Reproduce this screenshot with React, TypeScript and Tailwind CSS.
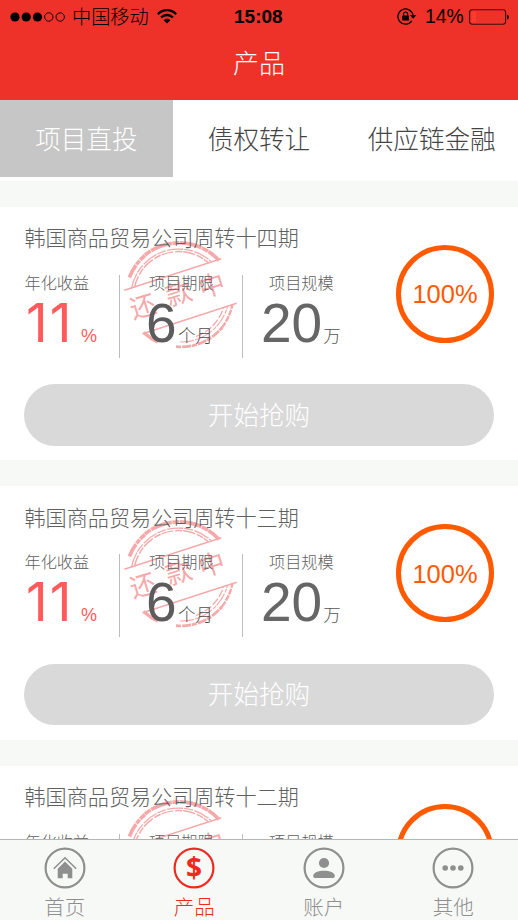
import React, { useState } from "react";

const projects = [
  { id: 14, name: "韩国商品贸易公司周转十四期", rate: "11", term: "6", scale: "20", progress: 100 },
  { id: 13, name: "韩国商品贸易公司周转十三期", rate: "11", term: "6", scale: "20", progress: 100 },
  { id: 12, name: "韩国商品贸易公司周转十二期", rate: "11", term: "6", scale: "20", progress: 100 },
];

const tabs = ["项目直投", "债权转让", "供应链金融"];

const StatusBar: React.FC = () => (
  <div className="flex h-[33px] items-center text-black">
    <svg className="ml-[10px] h-[10px] w-[56px] shrink-0" viewBox="0 0 56 10">
      <circle cx="5" cy="5" r="4.6" />
      <circle cx="16.2" cy="5" r="4.6" />
      <circle cx="27.5" cy="5" r="4.6" />
      <circle cx="38.8" cy="5" r="4.2" fill="none" stroke="#000" strokeWidth="0.9" />
      <circle cx="50.2" cy="5" r="4.2" fill="none" stroke="#000" strokeWidth="0.9" />
    </svg>
    <span className="ml-[6px] w-[78px] pt-[2px] text-[19.2px] leading-none whitespace-nowrap">中国移动</span>
    <svg className="ml-[7px] h-[15px] w-5 shrink-0" viewBox="0 0 20 15" fill="none" stroke="#000">
      <path d="M0.9 5.2 C6 -0.2 14 -0.2 19.1 5.2" strokeWidth="2.4" />
      <path d="M4.1 8.5 C7.4 5.2 12.6 5.2 15.9 8.5" strokeWidth="2.4" />
      <path d="M6.7 11.2 C8.5 9.4 11.5 9.4 13.3 11.2 L10 14.6 Z" fill="#000" stroke="none" />
    </svg>
    <span className="ml-[57px] w-[50px] text-[19px] leading-none font-bold">15:08</span>
    <svg className="ml-[113px] h-[17px] w-5 shrink-0" viewBox="0 0 20 17">
      <path d="M14.8 12.9 A7.6 7.6 0 1 1 16 7.2" fill="none" stroke="#000" strokeWidth="1.3" />
      <path d="M12.9 7 H19.4 L16.2 10.8 Z" />
      <rect x="5.2" y="7.6" width="6.8" height="5" rx="0.6" />
      <path d="M6.6 8 V6 A2 2 0 0 1 10.6 6 V8" fill="none" stroke="#000" strokeWidth="1.2" />
    </svg>
    <span className="ml-[8px] w-[40px] pt-px text-[19.3px] leading-none">14%</span>
    <svg className="ml-[4px] h-4 w-[41px] shrink-0" viewBox="0 0 41 16">
      <rect x="0.6" y="0.8" width="36" height="14.4" rx="2.6" fill="none" stroke="#000" strokeOpacity="0.75" strokeWidth="1.1" />
      <rect x="2.4" y="2.6" width="4.6" height="10.8" fill="#ff3b30" />
      <path d="M38 5.4 Q40 6.2 40 8 Q40 9.8 38 10.6 Z" />
    </svg>
  </div>
);

// red "repaying" seal behind the figures
const Stamp: React.FC = () => (
  <svg
    className="absolute top-[33px] left-[120px] h-[110px] w-[120px]"
    viewBox="120 239.5 120 110"
    fill="none"
    stroke="#f6a9aa"
  >
    <path d="M129.4 277 A53 53 0 0 1 145 255" strokeWidth="3.6" strokeDasharray="14 0.8 5 0.8" />
    <path d="M145 254.5 A54 54 0 0 1 219 260" strokeWidth="3.6" strokeDasharray="7 0.6 22 0.5" />
    <path d="M131.5 288 A48 48 0 0 1 211 261" strokeWidth="1.3" strokeDasharray="16 1 9 1.5" />
    <path d="M134.5 287 A45 45 0 0 1 208 262" strokeWidth="1.5" strokeDasharray="12 2 7 1" />
    <path d="M124.3 289.7 L221.3 258.3" strokeWidth="1.5" />
    <path d="M142.7 333.3 L236.7 302.7" strokeWidth="1.5" />
    <path d="M143.5 332 L152 338.5 L158 341.5" strokeWidth="3.4" />
    <path d="M152 334.5 A48 48 0 0 0 168 340.5" strokeWidth="1.6" strokeDasharray="5 2" />
    <path d="M176 346.2 A53 53 0 0 0 222 327" strokeWidth="2.8" strokeDasharray="5 1.2 9 0.8" />
    <path d="M222 327 A53 53 0 0 0 232.3 304.5" strokeWidth="2.4" strokeDasharray="6 1" />
    <path d="M180 341.5 A48 48 0 0 0 227.5 306" strokeWidth="1.2" strokeDasharray="14 1.5 4 1" />
    <path d="M196 336 A45 45 0 0 0 223.5 307.5" strokeWidth="1.3" strokeDasharray="8 2" />
    <g
      transform="rotate(-17 180 294)"
      className="font-normal"
      fill="#f6a9aa"
      stroke="none"
      fontSize="26"
      textAnchor="middle"
    >
      <text x="141" y="304">还</text>
      <text x="179" y="302">款</text>
      <text x="213" y="304">中</text>
    </g>
  </svg>
);

const ProgressRing: React.FC<{ value: number }> = ({ value }) => (
  <div className="mt-[38px] mr-6 ml-auto flex h-[98px] w-[98px] items-center justify-center rounded-full border-5 border-[#ff5a00] text-[25.5px] text-[#ff5a00]">
    <span className="pt-[3px] leading-none">{value}%</span>
  </div>
);

const ProjectCard: React.FC<{ project: (typeof projects)[number] }> = ({ project }) => (
  <div className="relative h-[253.5px] shrink-0 bg-white">
    <Stamp />
    <div className="relative flex h-[177.5px]">
      <div className="pl-6">
        <h2 className="mt-[18.5px] pl-[0.5px] text-[21.1px] leading-7 whitespace-nowrap text-[#606060]">
          {project.name}
        </h2>
        <div className="mt-[21.5px] flex h-[83px] whitespace-nowrap text-[#666]">
          <div className="w-[94.5px]">
            <p className="pl-[0.5px] text-[16.2px] leading-4 text-[#606060]">年化收益</p>
            <p className="flex items-baseline text-[#ff5a5c]">
              <span className="w-[55px] pl-[2px] font-['Inter'] text-[53.5px] leading-[64px] font-normal tracking-[2px]">
                {project.rate}
              </span>
              <span className="ml-[2px] text-[18px]">%</span>
            </p>
          </div>
          <div className="w-[124px] border-x-[1.5px] border-[#bdbdbd] pl-[29.5px]">
            <p className="text-[16.2px] leading-4 text-[#606060]">项目期限</p>
            <p className="flex items-baseline">
              <span className="-ml-[3px] text-[55px] leading-[64px] text-[#5c5c5c]">{project.term}</span>
              <span className="ml-[1.5px] text-[17.5px] text-[#4c4c4c]">个月</span>
            </p>
          </div>
          <div className="pl-[18.5px]">
            <p className="pl-[8px] text-[16.2px] leading-4 text-[#606060]">项目规模</p>
            <p className="flex items-baseline">
              <span className="text-[55px] leading-[64px]">{project.scale}</span>
              <span className="ml-[1px] text-[17.5px] text-[#555]">万</span>
            </p>
          </div>
        </div>
      </div>
      <ProgressRing value={project.progress} />
    </div>
    <button
      type="button"
      className="mx-6 flex h-[61.5px] w-[470px] items-center justify-center rounded-full bg-[#d9d9d9] pt-[2px] text-[25.6px] text-white"
    >
      开始抢购
    </button>
  </div>
);

const navItems = [
  {
    label: "首页",
    icon: (
      <>
        <path d="M9.8 21.7 L21 10.8 L32.2 21.7" fill="none" stroke="currentColor" strokeWidth="1.6" />
        <path d="M21 14.6 L28.3 21.7 V31.2 H23.7 V26.8 H18.7 V31.2 H13.7 V21.7 Z" />
      </>
    ),
  },
  {
    label: "产品",
    icon: (
      <text x="21" y="31" textAnchor="middle" fontSize="28" className="font-['Open_Sans'] font-bold">
        $
      </text>
    ),
  },
  {
    label: "账户",
    icon: (
      <>
        <circle cx="21" cy="16" r="5.1" />
        <path d="M10.2 29 C10.2 25.5 15.5 23.7 21 23.7 C26.5 23.7 31.8 25.5 31.8 29 Q31.8 31 30 31 H12 Q10.2 31 10.2 29 Z" />
      </>
    ),
  },
  {
    label: "其他",
    icon: (
      <>
        <circle cx="13.2" cy="21" r="2.8" />
        <circle cx="21" cy="21" r="2.8" />
        <circle cx="28.8" cy="21" r="2.8" />
      </>
    ),
  },
];

const App: React.FC = () => {
  const [activeTab, setActiveTab] = useState(0);
  const [activeNav, setActiveNav] = useState(1);

  return (
    <div className="flex h-[920px] w-[518px] flex-col overflow-hidden bg-[#f7f9f7] font-['Liberation_Sans','Noto_Sans_CJK_SC',sans-serif] font-light">
      <header className="h-[99.5px] shrink-0 bg-[#ee3129]">
        <StatusBar />
        <h1 className="flex h-[63px] items-center justify-center text-[26px] text-white">产品</h1>
      </header>

      <div className="flex h-[81.5px] shrink-0 bg-white">
        {tabs.map((tab, i) => (
          <button
            key={tab}
            type="button"
            onClick={() => setActiveTab(i)}
            className={`flex h-[77.5px] flex-1 items-center justify-center pt-[3px] text-[25.6px] whitespace-nowrap ${
              i === activeTab ? "bg-[#c6c6c6] text-white" : "text-[#444]"
            }`}
          >
            {tab}
          </button>
        ))}
      </div>

      <main className="flex min-h-0 flex-1 flex-col gap-[26px] overflow-hidden pt-[25.5px]">
        {projects.map((project) => (
          <ProjectCard key={project.id} project={project} />
        ))}
      </main>

      <nav className="flex h-[81px] shrink-0 border-t-[1.5px] border-[#b5b5b5] bg-[#f7f9f7]">
        {navItems.map((item, i) => (
          <button
            key={item.label}
            type="button"
            onClick={() => setActiveNav(i)}
            className={`flex flex-1 flex-col items-center pt-[7px] text-[20.5px] ${
              i === activeNav ? "text-[#ee2a20]" : "text-[#8f8f8f]"
            }`}
          >
            <svg className="h-[42px] w-[42px] shrink-0" viewBox="0 0 42 42" fill="currentColor">
              <circle cx="21" cy="21" r="19.4" fill="none" stroke="currentColor" strokeWidth="2.2" />
              {item.icon}
            </svg>
            <span className="mt-[4px] leading-[30px]">{item.label}</span>
          </button>
        ))}
      </nav>
    </div>
  );
};

export default App;
